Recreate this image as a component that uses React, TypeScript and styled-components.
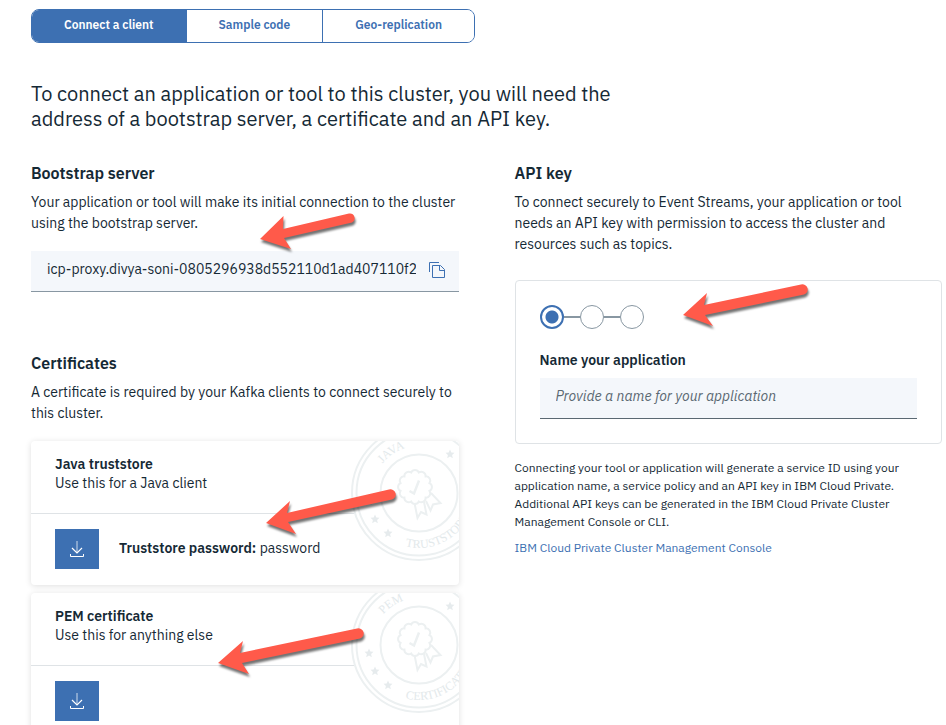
import React, { useId, useState } from "react";
import styled, { createGlobalStyle } from "styled-components";

const color = {
  ink: "#152935",
  blue: "#3d70b2",
  field: "#f4f7fb",
  rule: "#dfe3e6",
  muted: "#5a6872",
  step: "#8897a2",
  seal: "#ecf0f1",
  arrow: "#ff5a4a",
};

const GlobalStyle = createGlobalStyle`
  *, *::before, *::after { box-sizing: border-box; }
  body {
    margin: 0;
    background: #fff;
    color: ${color.ink};
    font-family: "IBM Plex Sans", Roboto, "Liberation Sans", sans-serif;
    font-size: 14px;
    line-height: 21px;
  }
  h1, h2, h3, p, ol { margin: 0; padding: 0; }
  button, input { font: inherit; color: inherit; }
`;

const Page = styled.main`
  padding: 9px 4px 16px 31px;
`;

const Tabs = styled.div`
  display: inline-flex;
  height: 34px;
  border: 1px solid ${color.blue};
  border-radius: 8px;
  overflow: hidden;
`;

const Tab = styled.button<{ $active: boolean }>`
  padding: 0 32px 4px;
  border: 0;
  background: ${(p) => (p.$active ? color.blue : "#fff")};
  color: ${(p) => (p.$active ? "#fff" : color.blue)};
  font-size: 12px;
  font-weight: 600;
  cursor: pointer;

  & + & {
    border-left: 1px solid ${color.blue};
  }
`;

const Intro = styled.h1`
  max-width: 600px;
  margin-top: 38px;
  font-size: 20px;
  font-weight: 400;
  line-height: 25px;
`;

const Columns = styled.div`
  display: grid;
  grid-template-columns: 1fr 1fr;
  align-items: start;
  gap: 56px;
  margin-top: 32px;
`;

const Column = styled.div`
  display: flex;
  flex-direction: column;
  gap: 61px;
  min-width: 0;
`;

const Section = styled.section`
  position: relative;
`;

const SectionTitle = styled.h2`
  margin-bottom: 9px;
  font-size: 16px;
  font-weight: 600;
  line-height: 20px;
`;

const AddressBar = styled.div`
  display: flex;
  align-items: center;
  height: 41px;
  margin-top: 17px;
  padding: 0 13px 4px 16px;
  background: ${color.field};
  border-bottom: 1px solid ${color.step};
`;

const AddressInput = styled.input`
  flex: 1;
  min-width: 0;
  padding: 0;
  border: 0;
  outline: 0;
  background: transparent;
`;

const CopyButton = styled.button`
  display: flex;
  margin-left: 12px;
  padding: 2px 0 0;
  border: 0;
  background: transparent;
  color: ${color.blue};
  cursor: pointer;
`;

const CardList = styled.div`
  display: flex;
  flex-direction: column;
  gap: 8px;
  margin-top: 17px;
`;

const Card = styled.article`
  position: relative;
  overflow: hidden;
  border-radius: 4px;
  background: #fff;
  box-shadow: 0 1px 6px rgba(0, 0, 0, 0.13);
`;

const CardHeader = styled.header`
  padding: 14px 24px 20px;
  border-bottom: 1px solid ${color.rule};
  line-height: 19px;
`;

const CardTitle = styled.h3`
  font-size: 14px;
  font-weight: 600;
  line-height: 19px;
`;

const CardBody = styled.div`
  position: relative;
  z-index: 1;
  display: flex;
  align-items: center;
  gap: 20px;
  padding: 15px 24px 16px;
`;

const Password = styled.p`
  padding-bottom: 2px;
`;

const DownloadButton = styled.button`
  display: flex;
  align-items: center;
  justify-content: center;
  width: 44px;
  height: 40px;
  padding: 0;
  border: 0;
  background: ${color.blue};
  color: #fff;
  cursor: pointer;
`;

const SealArt = styled.svg`
  position: absolute;
  top: -17px;
  right: -29px;
`;

const Strong = styled.strong`
  font-weight: 600;
`;

const KeyPanel = styled.form`
  margin-top: 25px;
  padding: 24px;
  border: 1px solid ${color.rule};
  border-radius: 4px;
`;

const Steps = styled.ol`
  display: flex;
  list-style: none;
`;

const Step = styled.li<{ $current?: boolean }>`
  display: flex;
  align-items: center;

  &::before {
    content: "";
    width: 24px;
    height: 24px;
    border: ${(p) => (p.$current ? "2px" : "1px")} solid ${(p) => (p.$current ? color.blue : color.step)};
    border-radius: 50%;
    background: ${(p) => (p.$current ? `radial-gradient(circle, ${color.blue} 6px, transparent 7px)` : "transparent")};
  }

  &:not(:last-child)::after {
    content: "";
    width: 16px;
    height: 2px;
    background: ${color.step};
  }
`;

const FieldLabel = styled.label`
  display: block;
  margin-top: 21px;
  margin-bottom: 7px;
  font-weight: 600;
`;

const NameInput = styled.input`
  display: block;
  width: 100%;
  height: 41px;
  padding: 0 16px 5px;
  border: 0;
  border-bottom: 1px solid ${color.muted};
  border-radius: 0;
  outline: 0;
  background: ${color.field};

  &::placeholder {
    color: ${color.muted};
    font-style: italic;
    opacity: 1;
  }
`;

const HelpText = styled.p`
  max-width: 400px;
  margin-top: 15px;
  font-size: 12px;
  line-height: 18px;
`;

const ConsoleLink = styled.a`
  display: inline-block;
  margin-top: 8px;
  color: ${color.blue};
  font-size: 12px;
  line-height: 18px;
  text-decoration: none;
`;

const ArrowArt = styled.svg<{ $left: number; $top: number }>`
  position: absolute;
  z-index: 2;
  left: ${(p) => p.$left}px;
  top: ${(p) => p.$top}px;
  overflow: visible;
  pointer-events: none;
  filter: drop-shadow(1px 3px 1px rgba(0, 0, 0, 0.55));
`;

type ArrowProps = { left: number; top: number; width: number; height: number; d: string };

const Arrow = ({ left, top, width, height, d }: ArrowProps) => (
  <ArrowArt $left={left} $top={top} width={width} height={height} aria-hidden="true">
    <path d={d} fill={color.arrow} />
  </ArrowArt>
);

const CopyIcon = () => (
  <svg width="18" height="18" viewBox="0 0 18 18" fill="none" stroke="currentColor" aria-hidden="true">
    <path d="M1.5 11V1.5H11" />
    <path d="M4.5 4.5h8l4 4v8h-12zM11.500 4.500v5h5" />
  </svg>
);

const DownloadIcon = () => (
  <svg width="16" height="18" viewBox="0 0 16 18" fill="none" stroke="currentColor" aria-hidden="true">
    <path d="M8 1v12" strokeOpacity="0.75" />
    <path d="M3 8l5 5 5-5" strokeWidth="1.200" />
    <path d="M1.500 14v2.500h13V14" />
  </svg>
);

const starPath = "M0-4.500 1.300-1.500 4.500-1.200 2.100 1 2.800 4.200 0 2.500-2.800 4.200-2.100 1-4.500-1.200-1.300-1.500Z";
const stars = [
  [31, -39],
  [-50, 8],
  [-44, 26],
  [-31, 40],
];

const scallop = (() => {
  const count = 12;
  const point = (i: number) => {
    const a = ((i * 360) / count - 15) * (Math.PI / 180);
    return `${(15 * Math.cos(a)).toFixed(2)} ${(15 * Math.sin(a)).toFixed(2)}`;
  };
  let d = `M${point(0)}`;
  for (let i = 1; i <= count; i++) d += `A4.300 4.300 0 0 1 ${point(i)}`;
  return `${d}Z`;
})();

const Seal = ({ upper, lower }: { upper: string; lower: string }) => {
  const id = useId();
  return (
    <SealArt width="138" height="138" viewBox="-69 -69 138 138" aria-hidden="true">
      <g fill="none" stroke={color.seal} strokeWidth="2">
        <circle r="67" fill="#fff" />
        <circle r="62.500" />
        <circle r="38.500" />
        <path d={scallop} transform="translate(-4 -6)" />
        <path d="M-9.500-2l4.500 2.500L0-12.500" strokeWidth="2.500" />
        <path d="M-4.500 10l3 15L2 19l5.500 2.500L5 9M7 8l4.500 9.500 2.500-6 7.500-1.500L12 0" />
      </g>
      <g fill="#e6ebed">
        {stars.map(([x, y]) => (
          <path key={`${x},${y}`} d={starPath} transform={`translate(${x} ${y})`} />
        ))}
      </g>
      <path id={`${id}u`} d="M-47 0A47 47 0 0 1 47 0" fill="none" />
      <path id={`${id}l`} d="M-55 0A55 55 0 0 0 55 0" fill="none" />
      <g fill="#e3e9eb" fontFamily='"Liberation Serif", serif' fontSize="12">
        <text>
          <textPath href={`#${id}u`} startOffset="31%" textAnchor="middle">
            {upper}
          </textPath>
        </text>
        <text>
          <textPath href={`#${id}l`} startOffset="42%">
            {lower}
          </textPath>
        </text>
      </g>
    </SealArt>
  );
};

const tabNames = ["Connect a client", "Sample code", "Geo-replication"];

export default function App() {
  const [active, setActive] = useState(0);
  const [name, setName] = useState("");

  return (
    <>
      <GlobalStyle />
      <Page>
        <Tabs role="tablist">
          {tabNames.map((label, i) => (
            <Tab key={label} type="button" role="tab" aria-selected={i === active} $active={i === active} onClick={() => setActive(i)}>
              {label}
            </Tab>
          ))}
        </Tabs>

        <Intro>
          To connect an application or tool to this cluster, you will need the address of a bootstrap server, a
          certificate and an API key.
        </Intro>

        <Columns>
          <Column>
            <Section>
              <SectionTitle id="bootstrap">Bootstrap server</SectionTitle>
              <p>Your application or tool will make its initial connection to the cluster using the bootstrap server.</p>
              <AddressBar>
                <AddressInput readOnly aria-labelledby="bootstrap" value="icp-proxy.divya-soni-0805296938d552110d1ad407110f2" />
                <CopyButton type="button" aria-label="Copy address">
                  <CopyIcon />
                </CopyButton>
              </AddressBar>
              <Arrow
                left={229}
                top={50}
                width={95}
                height={37}
                d="M0 26L23.500 3 23 16 89 0.500A4.800 4.800 0 0 1 92 9.500L24 25 31 36Z"
              />
            </Section>

            <Section>
              <SectionTitle>Certificates</SectionTitle>
              <p>A certificate is required by your Kafka clients to connect securely to this cluster.</p>
              <CardList>
                <Card>
                  <Seal upper="JAVA" lower="TRUSTSTORE" />
                  <CardHeader>
                    <CardTitle>Java truststore</CardTitle>
                    <p>Use this for a Java client</p>
                  </CardHeader>
                  <CardBody>
                    <DownloadButton type="button" aria-label="Download Java truststore">
                      <DownloadIcon />
                    </DownloadButton>
                    <Password>
                      <Strong>Truststore password:</Strong> password
                    </Password>
                  </CardBody>
                  <Arrow
                    left={235}
                    top={48}
                    width={130}
                    height={46}
                    d="M0 34L24 12 21 24 123 0.500A5.200 5.200 0 0 1 126 10.500L22 33 30 45Z"
                  />
                </Card>
                <Card>
                  <Seal upper="PEM" lower="CERTIFICATE" />
                  <CardHeader>
                    <CardTitle>PEM certificate</CardTitle>
                    <p>Use this for anything else</p>
                  </CardHeader>
                  <CardBody>
                    <DownloadButton type="button" aria-label="Download PEM certificate">
                      <DownloadIcon />
                    </DownloadButton>
                  </CardBody>
                  <Arrow
                    left={187}
                    top={35}
                    width={146}
                    height={46}
                    d="M0 35L25 13 22 25 139 0.500A5.200 5.200 0 0 1 142 10.500L24 35 31 46Z"
                  />
                </Card>
              </CardList>
            </Section>
          </Column>

          <Section>
            <SectionTitle>API key</SectionTitle>
            <p>
              To connect securely to Event Streams, your application or tool needs an API key with permission to access
              the cluster and resources such as topics.
            </p>
            <KeyPanel onSubmit={(e) => e.preventDefault()}>
              <Steps aria-label="Progress">
                <Step $current aria-current="step" />
                <Step />
                <Step />
              </Steps>
              <FieldLabel htmlFor="app-name">Name your application</FieldLabel>
              <NameInput
                id="app-name"
                placeholder="Provide a name for your application"
                value={name}
                onChange={(e) => setName(e.target.value)}
              />
            </KeyPanel>
            <HelpText>
              Connecting your tool or application will generate a service ID using your application name, a service
              policy and an API key in IBM Cloud Private. Additional API keys can be generated in the IBM Cloud Private
              Cluster Management Console or CLI.
            </HelpText>
            <ConsoleLink href="#console">IBM Cloud Private Cluster Management Console</ConsoleLink>
            <Arrow
              left={168}
              top={121}
              width={125}
              height={42}
              d="M0 31L24 9 21 21 118 0.500A5.200 5.200 0 0 1 121 10.500L22 31 30 42Z"
            />
          </Section>
        </Columns>
      </Page>
    </>
  );
}
